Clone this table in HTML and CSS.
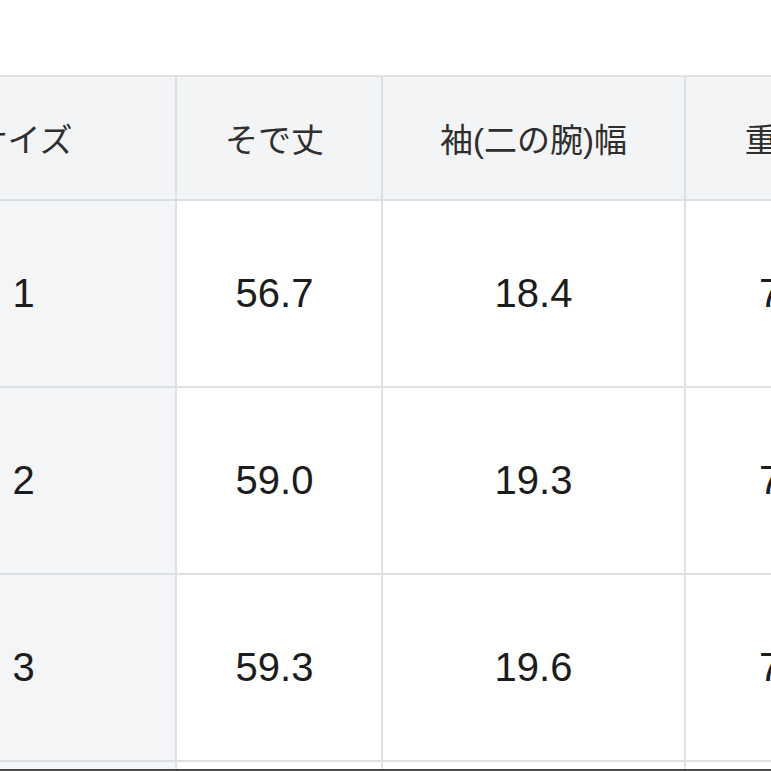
FILE: index.html
```html
<!DOCTYPE html>
<html lang="ja">
<head>
<meta charset="utf-8">
<title>サイズ表</title>
<link rel="stylesheet" href="styles.css">
</head>
<body>
<div class="page">
  <table class="size-table">
    <thead>
      <tr>
        <th class="c1">サイズ</th>
        <th class="c2">そで丈</th>
        <th class="c3">袖(二の腕)幅</th>
        <th class="c4">重量(g)</th>
      </tr>
    </thead>
    <tbody>
      <tr>
        <td class="c1">1</td>
        <td class="c2">56.7</td>
        <td class="c3">18.4</td>
        <td class="c4">72.0</td>
      </tr>
      <tr>
        <td class="c1">2</td>
        <td class="c2">59.0</td>
        <td class="c3">19.3</td>
        <td class="c4">75.0</td>
      </tr>
      <tr>
        <td class="c1">3</td>
        <td class="c2">59.3</td>
        <td class="c3">19.6</td>
        <td class="c4">78.0</td>
      </tr>
      <tr class="partial">
        <td class="c1"></td>
        <td class="c2"></td>
        <td class="c3"></td>
        <td class="c4"></td>
      </tr>
    </tbody>
  </table>
  <div class="bottom-bar"></div>
</div>
</body>
</html>
```
FILE: styles.css
```css
html, body {
  margin: 0;
  padding: 0;
  background: #ffffff;
}

.page {
  width: 771px;
  height: 771px;
  overflow: hidden;
  padding-top: 75px;
  box-sizing: border-box;
  font-family: "Liberation Sans", "Noto Sans CJK JP", sans-serif;
}

.size-table {
  table-layout: fixed;
  border-collapse: separate;
  border-spacing: 0;
  width: 1040px;
  margin-left: -130px;
  border-top: 2px solid #dfe2e5;
  border-left: 2px solid #dfe2e5;
}

.size-table th,
.size-table td {
  box-sizing: border-box;
  padding: 0;
  text-align: center;
  vertical-align: middle;
  border-right: 2px solid #dde0e3;
  border-bottom: 2px solid #dde0e3;
  font-weight: normal;
}

.size-table th {
  height: 124px;
  background: #f3f4f5;
  color: #2e2e2e;
  font-size: 33px;
  font-family: "Liberation Sans", "Noto Sans CJK JP", sans-serif;
}

.size-table td {
  height: 187px;
  background: #ffffff;
  color: #1c1c1c;
  font-size: 40px;
}

.size-table td.c1 {
  background: #f4f5f6;
}

.size-table .c1 { width: 305px; }
.size-table .c2 { width: 206px; padding-right: 9px; }
.size-table .c3 { width: 303px; }
.size-table .c4 { width: 226px; }

.size-table tr.partial td {
  height: 7px;
  border-bottom: none;
}

.bottom-bar {
  height: 12px;
  background: #4a4a4a;
}
```
